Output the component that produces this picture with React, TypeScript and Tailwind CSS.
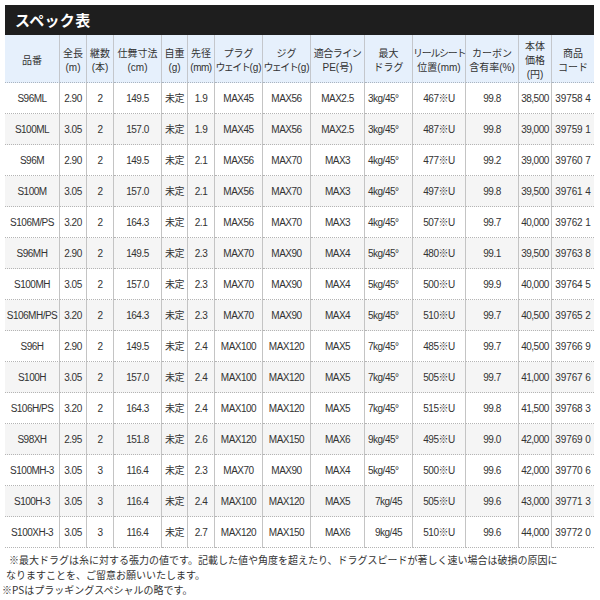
import type { ReactNode } from "react";

const colWidths = [
  "w-[55px]", "w-[27px]", "w-[27px]", "w-[48px]", "w-[26px]", "w-[27px]", "w-[48px]",
  "w-[48px]", "w-[54px]", "w-[48px]", "w-[53px]", "w-[53px]", "w-[33px]", "w-[42px]",
];

const weight = (
  <>
    <span className="tracking-[-1.5px]">ウェイト</span>(g)
  </>
);

const heads: ReactNode[][] = [
  ["品番"],
  ["全長", "(m)"],
  ["継数", "(本)"],
  ["仕舞寸法", "(cm)"],
  ["自重", "(g)"],
  ["先径", <span className="tracking-[-0.5px]">(mm)</span>],
  ["プラグ", weight],
  ["ジグ", weight],
  [<span className="tracking-[-0.5px]">適合ライン</span>, "PE(号)"],
  ["最大", "ドラグ"],
  [<span className="tracking-[-1.3px]">リールシート</span>, "位置(mm)"],
  ["カーボン", "含有率(%)"],
  ["本体", "価格", "(円)"],
  ["商品", "コード"],
];

const rows: string[][] = [
  ["S96ML", "2.90", "2", "149.5", "未定", "1.9", "MAX45", "MAX56", "MAX2.5", "3kg/45°", "467※U", "99.8", "38,500", "39758 4"],
  ["S100ML", "3.05", "2", "157.0", "未定", "1.9", "MAX45", "MAX56", "MAX2.5", "3kg/45°", "487※U", "99.8", "39,000", "39759 1"],
  ["S96M", "2.90", "2", "149.5", "未定", "2.1", "MAX56", "MAX70", "MAX3", "4kg/45°", "477※U", "99.2", "39,000", "39760 7"],
  ["S100M", "3.05", "2", "157.0", "未定", "2.1", "MAX56", "MAX70", "MAX3", "4kg/45°", "497※U", "99.8", "39,500", "39761 4"],
  ["S106M/PS", "3.20", "2", "164.3", "未定", "2.1", "MAX56", "MAX70", "MAX3", "4kg/45°", "507※U", "99.7", "40,000", "39762 1"],
  ["S96MH", "2.90", "2", "149.5", "未定", "2.3", "MAX70", "MAX90", "MAX4", "5kg/45°", "480※U", "99.1", "39,500", "39763 8"],
  ["S100MH", "3.05", "2", "157.0", "未定", "2.3", "MAX70", "MAX90", "MAX4", "5kg/45°", "500※U", "99.9", "40,000", "39764 5"],
  ["S106MH/PS", "3.20", "2", "164.3", "未定", "2.3", "MAX70", "MAX90", "MAX4", "5kg/45°", "510※U", "99.7", "40,500", "39765 2"],
  ["S96H", "2.90", "2", "149.5", "未定", "2.4", "MAX100", "MAX120", "MAX5", "7kg/45°", "485※U", "99.7", "40,500", "39766 9"],
  ["S100H", "3.05", "2", "157.0", "未定", "2.4", "MAX100", "MAX120", "MAX5", "7kg/45°", "505※U", "99.7", "41,000", "39767 6"],
  ["S106H/PS", "3.20", "2", "164.3", "未定", "2.4", "MAX100", "MAX120", "MAX5", "7kg/45°", "515※U", "99.8", "41,500", "39768 3"],
  ["S98XH", "2.95", "2", "151.8", "未定", "2.6", "MAX120", "MAX150", "MAX6", "9kg/45°", "495※U", "99.0", "42,000", "39769 0"],
  ["S100MH-3", "3.05", "3", "116.4", "未定", "2.3", "MAX70", "MAX90", "MAX4", "5kg/45°", "500※U", "99.6", "42,000", "39770 6"],
  ["S100H-3", "3.05", "3", "116.4", "未定", "2.4", "MAX100", "MAX120", "MAX5", "7kg/45", "505※U", "99.6", "43,000", "39771 3"],
  ["S100XH-3", "3.05", "3", "116.4", "未定", "2.7", "MAX120", "MAX150", "MAX6", "9kg/45", "510※U", "99.6", "44,000", "39772 0"],
];

const font = "font-['Liberation_Sans','Noto_Sans_CJK_JP',sans-serif]";

export default function App() {
  return (
    <div className={`w-[600px] h-[600px] bg-white text-[#333] ${font}`}>
      <div className="ml-[5px] pt-[5px] w-[589px]">
        {/* title bar */}
        <div className="h-[30px] bg-[#1e1e1e] flex items-center pl-[10px]">
          <span className="text-white font-bold text-[15px] tracking-[0.3px] font-['Noto_Sans_CJK_JP',sans-serif]">スペック表</span>
        </div>

        <table className="table-fixed w-[589px] border-separate border-spacing-0 text-[10px]">
          <colgroup>
            {colWidths.map((w, i) => (
              <col key={i} className={w} />
            ))}
          </colgroup>
          <thead>
            <tr>
              {heads.map((lines, i) => (
                <th
                  key={i}
                  className={`h-[47px] p-0 pt-[5px] bg-[#e6f0fc] font-normal text-center align-middle leading-[14px] whitespace-nowrap border-b border-b-[#aab4c0] [border-bottom-style:dotted] ${i < heads.length - 1 ? "border-r border-r-[#c4c7cc]" : ""}`}
                >
                  {lines.map((l, j) => (
                    <div key={j}>{l}</div>
                  ))}
                </th>
              ))}
            </tr>
          </thead>
          <tbody>
            {rows.map((r, ri) => (
              <tr key={ri} className={ri % 2 === 1 ? "bg-[#f5f5f5]" : "bg-white"}>
                {r.map((c, ci) => {
                  const leftAlign = ci === 9 && ri < 13;
                  return (
                    <td
                      key={ci}
                      className={`h-[31px] p-0 align-middle whitespace-nowrap border-b border-b-[#b4b4b4] [border-bottom-style:dotted] ${ci === 13 ? "tracking-[-0.1px]" : "tracking-[-0.5px]"} ${leftAlign ? "text-left pl-[3px]" : "text-center"} ${ci < r.length - 1 ? "border-r border-r-[#c4c4c4]" : ""}`}
                    >
                      {c}
                    </td>
                  );
                })}
              </tr>
            ))}
          </tbody>
        </table>
      </div>

      {/* notes */}
      <div className="pt-[4px] text-[10px] leading-[15px] font-['Noto_Sans_CJK_JP',sans-serif]">
        <p className="pl-[9px]">※最大ドラグは糸に対する張力の値です。記載した値や角度を超えたり、ドラグスピードが著しく速い場合は破損の原因に</p>
        <p className="pl-[6px]">なりますことを、ご留意お願いいたします。</p>
        <p className="pl-[2px]">※PSはプラッギングスペシャルの略です。</p>
      </div>
    </div>
  );
}
